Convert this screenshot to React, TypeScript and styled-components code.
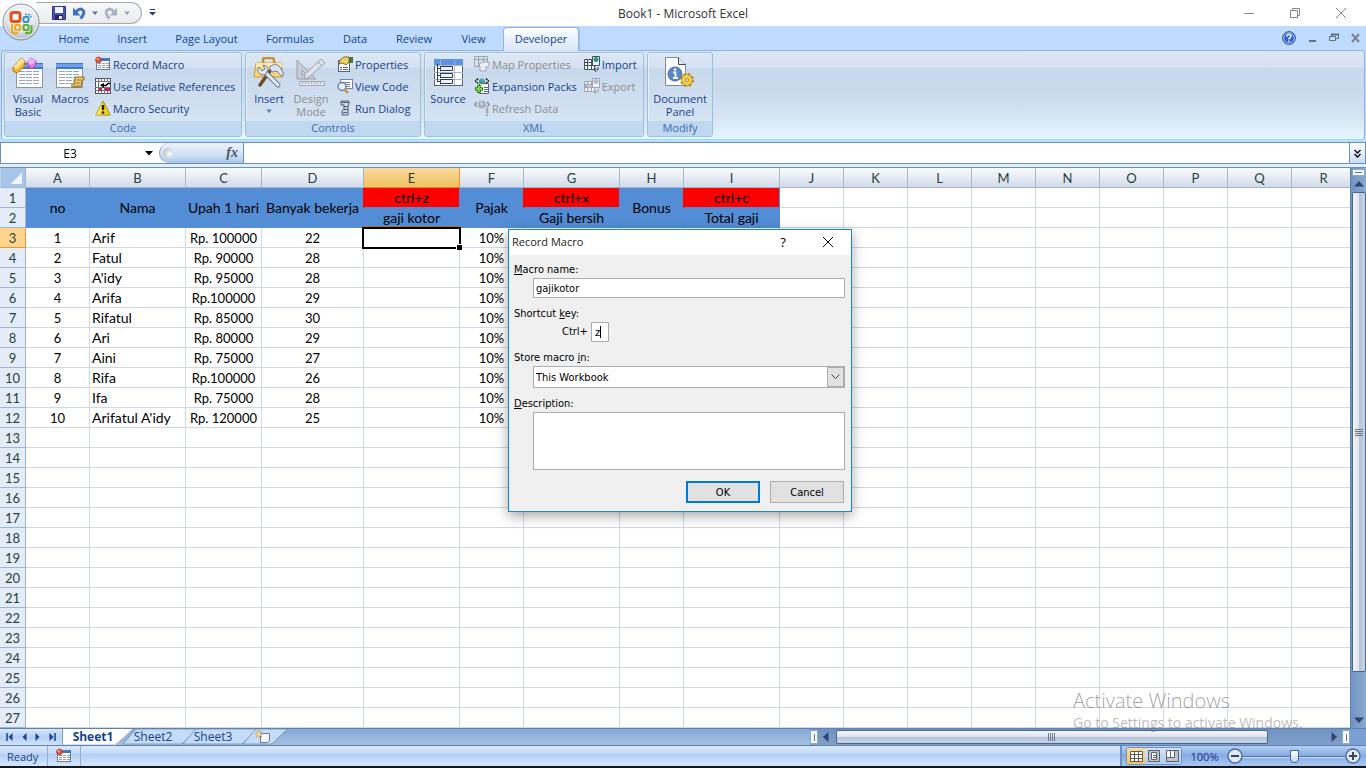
import React from "react";
import styled, { createGlobalStyle, css } from "styled-components";

const ui = `"Open Sans", "Noto Sans", sans-serif`;
const cellFont = `Lato, "Open Sans", sans-serif`;
const dialogFont = `"DejaVu Sans Condensed", "DejaVu Sans", sans-serif`;

const BLUE = "#538dd5";
const RED = "#ff0000";

const Global = createGlobalStyle`
  *, *::before, *::after { box-sizing: border-box; }
  body { margin: 0; background: #fff; font: 11px/13px ${ui}; color: #15428b; }
  button, input, select, textarea { font: inherit; color: inherit; margin: 0; border-radius: 0; }
  button { padding: 0; border: 0; background: none; }
  svg { display: block; flex: none; }
`;

const Page = styled.div`
  position: relative;
`;
const Workbook = styled.div`
  display: flex;
  flex-direction: column;
  min-height: 100vh;
  overflow: hidden;
  background: #bfdbff;
`;

/* ---------- title bar ---------- */
const TitleBar = styled.header`
  position: relative;
  display: flex;
  align-items: center;
  justify-content: space-between;
  height: 26px;
  background: #fff;
`;
const OfficeButton = styled.button`
  position: absolute;
  left: 1px;
  top: 3px;
  z-index: 2;
`;
const QuickAccess = styled.div`
  display: flex;
  align-items: center;
  height: 22px;
  width: 106px;
  margin-left: 36px;
  padding-left: 15px;
  gap: 6px;
  border: 1px solid #a3a8b0;
  border-left-color: transparent;
  border-radius: 0 11px 11px 0;
  background: linear-gradient(#f7f8f9, #e9ebee);
`;
const QuickMenu = styled.button`
  position: absolute;
  left: 149px;
  top: 8px;
`;
const Title = styled.h1`
  position: absolute;
  left: 0;
  right: 0;
  top: 6px;
  margin: 0;
  text-align: center;
  font-size: 12px;
  font-weight: 400;
  line-height: 16px;
  color: #333;
  pointer-events: none;
`;
const WindowButtons = styled.div`
  display: flex;
  gap: 34px;
  padding-right: 19px;
`;

/* ---------- ribbon ---------- */
const TabRow = styled.nav`
  display: flex;
  align-items: flex-end;
  height: 24px;
  padding-left: 45px;
  background: #bfdbff;
`;
const Tab = styled.button<{ $w: number; $active?: boolean }>`
  width: ${(p) => p.$w}px;
  height: 23px;
  padding-bottom: 1px;
  ${(p) =>
    p.$active &&
    css`
      position: relative;
      z-index: 1;
      margin: 0 0 -1px 2px;
      height: 24px;
      padding-bottom: 2px;
      border: 1px solid #8db2e3;
      border-bottom: 0;
      border-radius: 4px 4px 0 0;
      background: linear-gradient(#fff, #ebf3fe 40%, #dbe6f4);
      box-shadow: 1px 0 1px #9fc0e8;
    `}
`;
const BookButtons = styled.div`
  display: flex;
  align-items: center;
  gap: 12px;
  height: 24px;
  margin-left: auto;
  padding-right: 6px;
`;
const Ribbon = styled.section`
  display: flex;
  gap: 3px;
  height: 90px;
  margin: 0 1px;
  padding: 1px 2px 2px;
  border: 1px solid #8db2e3;
  border-bottom-color: #8fe3f5;
  border-radius: 4px;
  background: linear-gradient(#dbe6f4, #d7e3f2 16px, #c8d8ed 17px, #c9daee 40px, #d6e6f4 68px, #e5f6ff);
`;
const Group = styled.section<{ $w: number }>`
  display: flex;
  flex-direction: column;
  width: ${(p) => p.$w}px;
  border: 1px solid #9dbfdc;
  border-radius: 3px;
  box-shadow: inset 1px 1px 0 #e6eff9;
  background: linear-gradient(#dce7f5, #d5e2f2 14px, #c9d9ed 15px, #cfdff0 45px, #dbe8f5);
`;
const GroupBody = styled.div`
  display: flex;
  flex: 1;
  min-height: 0;
  padding: 0 2px;
`;
const GroupLabel = styled.h2`
  flex: none;
  margin: 0;
  height: 15px;
  text-align: center;
  font-size: 11px;
  line-height: 14px;
  font-weight: 400;
  color: #3e6aaa;
  background: #c1d8f1;
  border-radius: 0 0 3px 3px;
`;
const BigButton = styled.button<{ $w?: number; $off?: boolean }>`
  display: flex;
  flex-direction: column;
  align-items: center;
  gap: 3px;
  width: ${(p) => p.$w || 42}px;
  height: 66px;
  white-space: nowrap;
  color: ${(p) => (p.$off ? "#8d8d8d" : "#15428b")};
  & > svg { margin-top: 4px; }
`;
const MenuArrow = styled.i`
  display: grid;
  justify-content: center;
  padding-top: 3px;
`;
const Stack = styled.div<{ $gap: number }>`
  display: flex;
  flex-direction: column;
  margin-left: ${(p) => p.$gap}px;
`;
const SmallButton = styled.button<{ $off?: boolean }>`
  display: flex;
  align-items: center;
  gap: 2px;
  height: 22px;
  white-space: nowrap;
  color: ${(p) => (p.$off ? "#8d8d8d" : "#15428b")};
`;

/* ---------- formula bar ---------- */
const FormulaBar = styled.section`
  display: flex;
  height: 22px;
  margin-top: 2px;
  border: 1px solid #6a8fbd;
  background: #fff;
`;
const NameBox = styled.div`
  display: flex;
  align-items: center;
  gap: 6px;
  width: 158px;
`;
const NameInput = styled.input`
  width: 138px;
  border: 0;
  padding: 0;
  outline: 0;
  background: transparent;
  text-align: center;
  font-size: 12px;
  color: #000;
`;
const FxArea = styled.div`
  display: flex;
  align-items: center;
  justify-content: space-between;
  width: 85px;
  padding: 0 5px 0 3px;
  border-left: 1px solid #7fa0c8;
  border-right: 1px solid #6a8fbd;
  border-radius: 10px 0 0 10px;
  background: linear-gradient(#eef4fd, #cfe0f5 60%, #a9c5e8);
`;
const Knob = styled.span`
  width: 10px;
  height: 10px;
  border-radius: 50%;
  background: radial-gradient(circle at 70% 60%, #fff, #a9aeb9);
`;
const FxButton = styled.button`
  font: italic 700 14px/16px "Liberation Serif", serif;
  color: #4b5563;
`;
const FormulaInput = styled.input`
  flex: 1;
  border: 0;
  outline: 0;
  min-width: 0;
`;
const Expand = styled.button`
  display: grid;
  place-items: center;
  width: 16px;
  border-left: 1px solid #6a8fbd;
  background: linear-gradient(#fff, #c9dcf4);
`;
const Divider = styled.div`
  height: 4px;
  background: #e3eefb;
  border-bottom: 1px solid #6a8fbd;
`;

/* ---------- sheet ---------- */
const SheetArea = styled.main`
  display: flex;
  flex: 1;
  min-height: 0;
  background: #fff;
`;
const GridView = styled.div`
  flex: 1;
  min-width: 0;
  overflow: hidden;
`;
const Grid = styled.table`
  table-layout: fixed;
  width: 0;
  border-collapse: separate;
  border-spacing: 0;
  font: 14px/18px ${cellFont};
  color: #000;
`;
const Col = styled.col<{ $w: number }>`
  width: ${(p) => p.$w}px;
`;
const head = css`
  padding: 0;
  height: 20px;
  font-weight: 400;
  font-size: 13px;
  color: #27413e;
`;
const ColHead = styled.th<{ $on?: boolean }>`
  ${head}
  border-right: 1px solid ${(p) => (p.$on ? "#e8963a" : "#9eb6ce")};
  border-bottom: 1px solid ${(p) => (p.$on ? "#d98a32" : "#9eb6ce")};
  background: ${(p) => (p.$on ? "linear-gradient(#f9d99f, #f1c15f)" : "linear-gradient(#f9fcfd, #d3dbe9)")};
`;
const RowHead = styled.th<{ $on?: boolean }>`
  ${head}
  border-right: 1px solid ${(p) => (p.$on ? "#e8963a" : "#9eb6ce")};
  border-bottom: 1px solid ${(p) => (p.$on ? "#e8963a" : "#9eb6ce")};
  background: ${(p) => (p.$on ? "#ffd58d" : "#e4ecf7")};
`;
const Corner = styled.th`
  padding: 0;
  border: 1px solid #9eb6ce;
  border-left-color: #b9d1ef;
  border-top: 0;
  background: linear-gradient(135deg, transparent 68%, #eef4fc 69%) 0 0 / 21px 16px no-repeat, #a9c4e9;
`;
const Cell = styled.td<{ $fill?: string; $left?: boolean; $num?: boolean }>`
  position: relative;
  height: 20px;
  padding: 0 ${(p) => (p.$left ? 2 : 0)}px;
  white-space: nowrap;
  font-size: ${(p) => (p.$num ? 13 : 14)}px;
  text-align: ${(p) => (p.$left ? "left" : "center")};
  background: ${(p) => p.$fill || "#fff"};
  border-right: 1px solid ${(p) => (p.$fill ? BLUE : "#d0d7e5")};
  border-bottom: 1px solid ${(p) => (p.$fill ? BLUE : "#d0d7e5")};
  box-shadow: ${(p) => (p.$fill === RED ? `-1px 0 0 ${RED}` : "none")};
`;
const Selection = styled.span`
  position: absolute;
  inset: -1px -2px -2px;
  z-index: 1;
  border: 2px solid #000;
  box-shadow: 0 -1px 0 #b5702a;
  &::after {
    content: "";
    position: absolute;
    right: -3px;
    bottom: -3px;
    width: 6px;
    height: 6px;
    background: #000;
    border: solid #fff;
    border-width: 1px 0 0 1px;
  }
`;

/* ---------- scroll bars ---------- */
const VScroll = styled.div`
  display: flex;
  flex-direction: column;
  align-items: center;
  width: 16px;
  border-left: 1px solid #5d83b5;
  background: linear-gradient(90deg, #6f93c2, #8baad2);
`;
const SplitV = styled.div`
  display: grid;
  place-items: center;
  width: 13px;
  height: 7px;
  margin-top: 1px;
  border: 1px solid #86a9d4;
  background: #fff;
  &::before { content: ""; width: 7px; height: 1px; background: #4d76ab; }
`;
const ArrowSlot = styled.button`
  display: grid;
  place-items: center;
  width: 16px;
  height: 16px;
`;
const ThumbV = styled.div`
  display: grid;
  place-items: center;
  width: 14px;
  flex: 480;
  border: 1px solid #4a668f;
  border-radius: 2px;
  background: linear-gradient(90deg, #f4f6fa, #dfe5ee 45%, #b4c4d9 55%, #c7d4e5);
`;
const Spring = styled.div<{ $f: number }>`
  flex: ${(p) => p.$f};
`;
const BottomBar = styled.div`
  display: flex;
  height: 18px;
  border-top: 1px solid #5d83b5;
  border-bottom: 1px solid #5d83b5;
  background: linear-gradient(#86a8d6, #a5bfe0);
`;
const SheetNav = styled.div`
  display: flex;
  align-items: center;
  justify-content: space-around;
  width: 63px;
  padding: 0 3px;
  border-right: 1px solid #7f9fc9;
  background: linear-gradient(#d9e7f9, #b6d0f2 50%, #d0e2f9);
`;
const SheetTab = styled.button<{ $active?: boolean; $w: number }>`
  position: relative;
  width: ${(p) => p.$w}px;
  font-size: 12px;
  line-height: 16px;
  font-weight: ${(p) => (p.$active ? 700 : 400)};
  z-index: ${(p) => (p.$active ? 1 : 0)};
  & > span { position: relative; }
  & > svg { position: absolute; left: 0; top: 0; }
`;
const NewSheet = styled.span`
  display: grid;
  justify-content: center;
`;
const HScroll = styled.div`
  display: flex;
  align-items: center;
  width: 556px;
  margin-left: auto;
  background: linear-gradient(#6f93c2, #7f9fc9);
`;
const SplitH = styled.div`
  display: grid;
  place-items: center;
  width: 8px;
  height: 14px;
  border: 1px solid #86a9d4;
  background: #fff;
  &::before { content: ""; width: 1px; height: 7px; background: #4d76ab; }
`;
const ThumbH = styled.div`
  display: grid;
  place-items: center;
  flex: 431;
  height: 14px;
  margin-left: 2px;
  border: 1px solid #4a668f;
  border-radius: 2px;
  background: linear-gradient(#f4f6fa, #dfe5ee 45%, #b4c4d9 55%, #c7d4e5);
`;
const ScrollCorner = styled.div`
  width: 16px;
  height: 16px;
  background: #7b9fd3;
`;

/* ---------- status bar ---------- */
const StatusBar = styled.footer`
  display: flex;
  align-items: center;
  height: 22px;
  border-bottom: 2px solid #14161d;
  background: linear-gradient(#dbe8fb, #c5dbf8 7px, #b3cff4 8px, #d5e6fc);
`;
const Ready = styled.span`
  width: 47px;
  padding-left: 7px;
`;
const RecordSlot = styled.button`
  display: grid;
  place-items: center;
  width: 34px;
  height: 20px;
  border: solid #8fb0dc;
  border-width: 0 1px;
`;
const ZoomArea = styled.div`
  display: flex;
  align-items: center;
  height: 20px;
  width: 246px;
  margin-left: auto;
  padding: 0 5px 0 4px;
  border-left: 2px solid #6d94c9;
  background: linear-gradient(#b4cff3, #8db2e5 8px, #84abe2 9px, #a9c8f2);
`;
const ViewButtons = styled.div`
  display: flex;
  height: 18px;
  border: 1px solid #6d94c9;
  border-radius: 2px;
`;
const ViewButton = styled.button<{ $on?: boolean }>`
  display: grid;
  place-items: center;
  width: 18px;
  background: ${(p) => (p.$on ? "linear-gradient(#fbdca5, #f7c65c)" : "linear-gradient(#d4e4f9, #b0ccf0)")};
`;
const Percent = styled.button`
  width: 45px;
  color: #15308b;
`;
const Slider = styled.div`
  display: flex;
  align-items: center;
  flex: 1;
  height: 18px;
  background: linear-gradient(#4a72a8 1px, #d5e4f8 1px) 0 9px / 100% 2px no-repeat;
`;
const Range = styled.input`
  appearance: none;
  width: 100%;
  height: 14px;
  background: transparent;
  &::-webkit-slider-thumb {
    appearance: none;
    width: 9px;
    height: 13px;
    background: linear-gradient(#fff, #c5d8f3);
    border: 1px solid #3d639b;
    border-radius: 1px 1px 5px 5px;
  }
`;

/* ---------- dialog ---------- */
const Dialog = styled.form`
  position: absolute;
  left: 508px;
  top: 229px;
  z-index: 5;
  width: 344px;
  border: 1px solid #1883d7;
  background: #f0f0f0;
  box-shadow: 0 4px 12px rgba(0, 0, 0, 0.35);
  font: 11px/14px ${dialogFont};
  color: #000;
`;
const DialogTitle = styled.div`
  display: flex;
  align-items: center;
  height: 25px;
  padding: 0 17px 1px 3px;
  background: #fff;
  font: 11px/16px ${ui};
  & > h2 { margin: 0; flex: 1; font: inherit; color: #222; }
`;
const Help = styled.button`
  width: 12px;
  margin-right: 33px;
  font-size: 13px;
  color: #000;
`;
const DialogBody = styled.div`
  display: flex;
  flex-direction: column;
  padding: 8px 6px 8px 5px;
`;
const Label = styled.label`
  line-height: 14px;
  & > u { text-underline-offset: 1px; }
`;
const control = css`
  border: 1px solid #abadb3;
  background: #fff;
  outline: 0;
`;
const NameField = styled.input`
  ${control}
  height: 20px;
  margin: 1px 0 9px 19px;
  padding: 0 2px;
`;
const KeyRow = styled.div`
  position: relative;
  display: flex;
  align-items: center;
  gap: 3px;
  margin: 1px 0 9px 48px;
`;
const KeyField = styled.input`
  ${control}
  width: 18px;
  height: 20px;
  padding: 0 3px;
`;
const Caret = styled.span`
  position: absolute;
  right: 244px;
  top: 4px;
  width: 1px;
  height: 12px;
  background: #000;
`;
const SelectWrap = styled.div`
  position: relative;
  margin: 1px 0 9px 19px;
  & > span {
    position: absolute;
    right: 1px;
    top: 1px;
    display: grid;
    place-items: center;
    width: 17px;
    height: 20px;
    border: 1px solid #abadb3;
    background: #e1e1e1;
    pointer-events: none;
  }
`;
const Select = styled.select`
  ${control}
  appearance: none;
  display: block;
  width: 100%;
  height: 22px;
  padding: 1px 2px 0;
`;
const Description = styled.textarea`
  ${control}
  height: 58px;
  margin: 1px 0 11px 19px;
  resize: none;
`;
const Actions = styled.div`
  display: flex;
  justify-content: flex-end;
  gap: 10px;
  padding-right: 1px;
`;
const Action = styled.button<{ $primary?: boolean }>`
  width: 74px;
  height: 22px;
  padding-top: 1px;
  border: ${(p) => (p.$primary ? "2px solid #0078d7" : "1px solid #adadad")};
  background: #e1e1e1;
`;

const Watermark = styled.aside`
  position: absolute;
  right: 56px;
  bottom: 36px;
  z-index: 3;
  width: 237px;
  white-space: nowrap;
  color: rgba(120, 120, 120, 0.5);
  font: 14px/18px ${ui};
  pointer-events: none;
  & > strong {
    display: block;
    font-size: 20px;
    line-height: 27px;
    font-weight: 300;
    color: rgba(100, 100, 100, 0.6);
  }
`;

/* ---------- drawings ---------- */
const TableSheet = ({ x = 0, y = 0, w = 26, h = 24 }) => (
  <g>
    <rect x={x + 0.5} y={y + 0.5} width={w} height={h} fill="#fff" stroke="#8795ad" />
    <rect x={x} y={y} width={w + 1} height="6" fill="#3d78d4" />
    <rect x={x} y={y + 1} width={w + 1} height="3" fill="#6fa0ea" />
    {[8, 11, 14, 17, 20].map((d) => (
      <path key={d} d={`M${x + 3} ${y + d + 0.5}h6m1 0h6m1 0h6`} stroke="#98a5bb" />
    ))}
  </g>
);
const VisualBasicIcon = () => (
  <svg width="32" height="32" viewBox="0 0 32 32">
    <TableSheet x={4} y={6} />
    <path d="M1 10 9 1l4 3-1 6-7 6-4-2z" fill="#eeb93f" stroke="#a97816" />
    <path d="M1 10 9 1l4 3-8 8z" fill="#fbe08e" />
    <path d="m15 5 4-4 5 3v4l-4 4-5-4z" fill="#d878e0" stroke="#9c4fa9" />
    <path d="m15 5 4-4 5 3-4 4z" fill="#f0b2f4" />
  </svg>
);
const MacrosIcon = () => (
  <svg width="32" height="32" viewBox="0 0 32 32">
    <TableSheet x={2} y={6} />
    <path d="M21 20h9v3h-2l-1 7h-8c-2 0-2-3 0-3h1z" fill="#e9c873" stroke="#8c6a1d" />
    <path d="M22 23h5M21 26h5M19 29h7" stroke="#a9822e" />
  </svg>
);
const SmallTable = () => (
  <svg width="16" height="16" viewBox="0 0 16 16">
    <rect x="1.500" y="2.500" width="13" height="11" fill="#fff" stroke="#67789b" />
    <path d="M1 2h14v3H1z" fill="#4576c4" />
    <path d="M3 7.500h11M3 9.500h11M3 11.500h11" stroke="#8e9dbb" strokeDasharray="3 1" />
    <circle cx="3.500" cy="4" r="3" fill="#dd5a3c" stroke="#a8341f" strokeWidth=".6" />
    <circle cx="2.600" cy="3" r="1" fill="#f7b29f" />
  </svg>
);
const RelativeIcon = () => (
  <svg width="16" height="16" viewBox="0 0 16 16">
    <rect x="0.500" y="0.500" width="15" height="15" fill="#fff" stroke="#444c5e" />
    <path d="M3.500 0v16M6.500 0v16M9.500 0v16M12.500 0v16M0 3.500h16M0 9.500h16M0 12.500h16" stroke="#6c7386" />
    <path d="M6 4h9v5H6z" fill="#fff" />
    <path d="M4 10h3v3H4zM10 10h5v3h-5z" fill="#c81e4a" />
    <path d="M8 7.500h3l2-2h2" stroke="#000" strokeWidth="1.500" fill="none" />
    <path d="m9 5-4 2 4 3z" fill="#000" />
  </svg>
);
const WarningIcon = () => (
  <svg width="16" height="16" viewBox="0 0 16 16">
    <path d="M8 1 15.300 15H.7z" fill="#f8d516" stroke="#a88c0a" strokeLinejoin="round" />
    <path d="M8 1 .7 15H5z" fill="#fdf08a" opacity=".6" />
    <path d="M8 5v5" stroke="#222" strokeWidth="2.400" />
    <circle cx="8" cy="12.500" r="1.300" fill="#222" />
  </svg>
);
const ToolsIcon = () => (
  <svg width="32" height="32" viewBox="0 0 32 32">
    <path d="M10 6V3q0-2 2-2h7q2 0 2 2v3" fill="none" stroke="#c8922a" strokeWidth="2.500" />
    <path d="M3 6h25l2 14H1z" fill="#fad679" stroke="#cf9930" />
    <path d="M3 6h25l1 4H3z" fill="#fdebb5" />
    <path d="m17 14-10 14" stroke="#704c2a" strokeWidth="3.500" strokeLinecap="round" />
    <path d="m16 10 6-3q5 1 6 5l3 5-3 2-4-5-5 1z" fill="#dbe3ef" stroke="#7384a0" />
    <path d="m12 15 13 13" stroke="#6a7c98" strokeWidth="5" strokeLinecap="round" />
    <path d="m12 15 13 13" stroke="#e3eaf4" strokeWidth="3" strokeLinecap="round" />
    <path d="M6 10q-3 4 1 7 3 2 6 0l2-5q-1-4-5-4l2 4-3 2z" fill="#e3eaf4" stroke="#6a7c98" />
  </svg>
);
const DesignIcon = () => (
  <svg width="32" height="32" viewBox="0 0 32 32">
    <path d="M2 3v19h19zM7 13v5h5z" fill="#c6cbd4" fillRule="evenodd" stroke="#9aa2b0" />
    <path d="m10 17 16-15 4 4-16 14-5 2z" fill="#dfe3e9" stroke="#9aa2b0" />
    <path d="m23 5 4 4" stroke="#9aa2b0" />
    <rect x="4.500" y="24.500" width="25" height="4" fill="#e2e5ea" stroke="#a5acb8" />
    <path d="M7.500 25v2m3-2v2m3-2v2m3-2v2m3-2v2m3-2v2m3-2v2" stroke="#a5acb8" />
  </svg>
);
const PropertiesIcon = () => (
  <svg width="16" height="16" viewBox="0 0 16 16">
    <rect x="1.500" y="4.500" width="11" height="11" fill="#fff" stroke="#51617e" />
    <path d="M3 11.500h2m1 0h5M3 13.500h2m1 0h5" stroke="#51617e" />
    <path d="m3 4 4-3h5v5L9 9 6 7 2 8z" fill="#f1cf60" stroke="#8a6a14" />
    <path d="M12 1h4v6h-4z" fill="#427447" />
  </svg>
);
const ViewCodeIcon = () => (
  <svg width="16" height="16" viewBox="0 0 16 16">
    <rect x="3.500" y="1.500" width="12" height="9" fill="#fff" stroke="#7383a0" />
    <path d="M6 4.500h7M6 6.500h7M9 8.500h4" stroke="#7383a0" />
    <circle cx="5" cy="8.500" r="4" fill="#e5eefa" stroke="#6b7c99" strokeWidth="1.400" />
    <path d="m8 12 3 3" stroke="#d8892f" strokeWidth="2.400" />
  </svg>
);
const RunDialogIcon = () => (
  <svg width="16" height="16" viewBox="0 0 16 16">
    <path d="M4 1h8v3l-1 3v8H5v-4l2-2V5H4z" fill="#cfd6e2" stroke="#4f5d78" />
    <path d="M4 2.500h8M7 6.500h4M7 9.500h4M6 12.500h4" stroke="#4f5d78" />
  </svg>
);
const SourceIcon = () => (
  <svg width="32" height="32" viewBox="0 0 32 32">
    <rect x="2.500" y="2.500" width="28" height="26" fill="#fff" stroke="#53627e" />
    <path d="M2 2h29v6H2z" fill="#5b93e6" />
    <path d="M8.500 3v25M22.500 3v25M2 8.500h29M2 15.500h29M2 22.500h29" stroke="#a9b6cc" />
    <path d="M5.500 7v18M5 11.500h4M5 18.500h4M5 24.500h4" stroke="#2b3a55" fill="none" />
    <path d="M8.500 9.500h12v4h-12zM8.500 16.500h12v4h-12zM8.500 22.500h12v4h-12z" fill="#eef3fa" stroke="#2b3a55" />
  </svg>
);
const MapPropsIcon = () => (
  <svg width="16" height="16" viewBox="0 0 16 16">
    <path d="M.5.5h13v10H.5zM0 3.500h14M4.500 0v11M9.500 0v11" fill="#dde2ea" stroke="#9da6b5" />
    <path d="m5 8 4-2h6v4l-3 1v4H6v-4z" fill="#eceff4" stroke="#9da6b5" />
  </svg>
);
const ExpansionIcon = () => (
  <svg width="16" height="16" viewBox="0 0 16 16">
    <path d="M5.500 5.500h9v10h-9z" fill="#fff" stroke="#5c6a86" />
    <path d="M10 9.500h4M10 11.500h4M10 13.500h4" stroke="#5c6a86" />
    <path d="M4 .5 1.500 3 4 5.500M12 .5 14.500 3 12 5.500" fill="none" stroke="#111" strokeWidth="1.400" strokeDasharray="2 .7" />
    <circle cx="8" cy="3.500" r="3" fill="#3f9a76" />
    <path d="M7 1h3v2H7z" fill="#5ea1e8" />
    <path d="M5 7v8M1 11h8" stroke="#2f7d15" strokeWidth="3.600" />
    <path d="M5 8v6M2 11h6" stroke="#7edb3b" strokeWidth="1.800" />
  </svg>
);
const RefreshIcon = () => (
  <svg width="16" height="16" viewBox="0 0 16 16">
    <path d="M3 2 .7 4.500 3 7M13 2l2.300 2.500L13 7" fill="none" stroke="#8993a5" strokeWidth="1.300" />
    <circle cx="8" cy="4.500" r="4" fill="#a9b1c0" />
    <path d="M6 2h3v3H6z" fill="#c8ced8" />
    <path d="M13 8v5" stroke="#9da6b5" strokeWidth="2.400" />
    <circle cx="13" cy="15" r="1.200" fill="#9da6b5" />
  </svg>
);
const PortIcon = ({ off = false }) => {
  const c = off ? "#9da6b5" : "#42506b";
  return (
    <svg width="16" height="16" viewBox="0 0 16 16">
      <path d="M.5 3.500h10v10H.5zM0 6.500h11M3.500 4v9M7.500 4v9M0 9.500h11" fill="#f4f6fa" stroke={c} />
      <path d="M8.500.5h7v9h-7z" fill="#eef2f8" stroke={c} />
      <circle cx="12" cy="3.500" r="2.500" fill={off ? "#b5bcc8" : "#2f9a62"} />
      {off && <path d="M1 8q4-4 8 0-4 4-8 0z" fill="#c5cbd5" stroke={c} />}
      <path d="M14 11v3h-4m2-2-2 2 2 2" fill="none" stroke={c} />
    </svg>
  );
};
const DocumentPanelIcon = () => (
  <svg width="32" height="32" viewBox="0 0 32 32">
    <path d="M1.500.5h13l7 7v21h-20z" fill="#fff" stroke="#7e8aa1" />
    <path d="M14.500.5v7h7" fill="#e3e8f0" stroke="#3e485c" />
    <circle cx="11" cy="17" r="7" fill="#5b86c7" stroke="#446cab" />
    <path d="M9 15.500h2.500V21M9 21h5" stroke="#fff" strokeWidth="1.800" fill="none" />
    <circle cx="11" cy="12.500" r="1.300" fill="#fff" />
    <circle cx="23" cy="23" r="5.500" fill="none" stroke="#b88a16" strokeWidth="3" strokeDasharray="2.300 2.020" />
    <circle cx="23" cy="23" r="3.600" fill="none" stroke="#b88a16" strokeWidth="4.500" />
    <circle cx="23" cy="23" r="3.600" fill="none" stroke="#f5cf4c" strokeWidth="3" />
  </svg>
);
const OfficeLogo = () => (
  <svg width="40" height="40" viewBox="0 0 40 40">
    <defs>
      <radialGradient id="orb" cx="50%" cy="35%" r="65%">
        <stop offset="0" stopColor="#fff" />
        <stop offset=".6" stopColor="#e4e7ec" />
        <stop offset="1" stopColor="#a9b0bb" />
      </radialGradient>
    </defs>
    <circle cx="20" cy="19" r="18" fill="url(#orb)" stroke="#8d96a5" />
    <circle cx="20" cy="19" r="16.500" fill="none" stroke="#fff" strokeOpacity=".8" />
    <rect x="10" y="9.500" width="9" height="9" rx="2" fill="none" stroke="#e2541b" strokeWidth="3" />
    <rect x="22.500" y="14" width="5" height="5" rx="1" fill="none" stroke="#2f8fd8" strokeWidth="2" />
    <path d="M24 11.500h4q2 0 2 4" fill="none" stroke="#2f8fd8" strokeWidth="1.500" strokeDasharray="2 1" />
    <rect x="14" y="22" width="5" height="5" rx="1" fill="none" stroke="#f0ab19" strokeWidth="2.200" />
    <path d="M11 21v7q0 2 3 2h3" fill="none" stroke="#f0ab19" strokeWidth="2" />
    <rect x="22.500" y="22" width="5" height="5" rx="1" fill="none" stroke="#5db337" strokeWidth="2.200" />
    <path d="M30.500 22v5q0 3-3 3H24" fill="none" stroke="#5db337" strokeWidth="2" />
  </svg>
);
const SaveIcon = () => (
  <svg width="14" height="14" viewBox="0 0 14 14">
    <path d="M.5.5h13v13H.5z" fill="#4a4fb4" stroke="#30368f" />
    <path d="M3 1h8v6H3z" fill="#f3f5fb" />
    <path d="M3 9h8v5H3z" fill="#23276f" />
    <path d="M7 10h3v3H7z" fill="#f3f5fb" />
  </svg>
);
const UndoIcon = ({ off = false }) => (
  <svg width="14" height="14" viewBox="0 0 14 14">
    <g transform={off ? "matrix(-1 0 0 1 14 0)" : undefined}>
      <path d="M4 6q3-4 6-2.500 3.500 2 .5 6.500l-2 2.500" fill="none" stroke={off ? "#a9b4c6" : "#3e6fc9"} strokeWidth="3" />
      <path d="M1 1.500v8h7.500z" fill={off ? "#a9b4c6" : "#3e6fc9"} />
    </g>
  </svg>
);
const Tri = ({ c = "#15428b", dir = "down", s = 6 }: { c?: string; dir?: "down" | "up" | "left" | "right"; s?: number }) => {
  const r = { down: 0, left: 90, up: 180, right: 270 }[dir];
  return (
    <svg width={s + 2} height={s + 2} viewBox="0 0 8 8">
      <path d="M0 2h8L4 6.500z" fill={c} transform={`rotate(${r} 4 4)`} />
    </svg>
  );
};
const NewSheetIcon = () => (
  <svg width="16" height="14" viewBox="0 0 16 14">
    <path d="M5.500 3.500h9v7l-2 2h-7z" fill="#f5f8fd" stroke="#62789f" />
    <path d="M4 0v8M0 4h8M1 1l6 6M7 1 1 7" stroke="#d99a2a" />
    <circle cx="4" cy="4" r="1.500" fill="#fff1b8" />
  </svg>
);
const TabShape = ({ w, active = false }: { w: number; active?: boolean }) => (
  <svg width={w + 16} height="16" viewBox={`0 0 ${w + 16} 16`}>
    <path
      d={active ? `M0 0h${w + 14}L${w} 13q-1 2-3 2H0z` : `M0 15 12 1q1-1 2-1h${w}L${w} 14l-2 1z`}
      fill={active ? "#fff" : "#c6dbf6"}
      stroke={active ? "#fff" : "#7f9fc9"}
    />
    {active && <path d={`M${w + 14} 0 ${w} 13q-1 2-3 2`} fill="none" stroke="#7f9fc9" />}
  </svg>
);
const NavArrow = ({ dir, bar }: { dir: "left" | "right"; bar?: boolean }) => (
  <svg width="8" height="8" viewBox="0 0 8 8">
    <g transform={dir === "right" ? "matrix(-1 0 0 1 8 0)" : undefined}>
      <path d="M6.500 0v8L2.500 4z" fill="#15428b" />
      {bar && <path d="M1 0v8" stroke="#15428b" strokeWidth="1.500" />}
    </g>
  </svg>
);
const Grip = ({ v = false }) => (
  <svg width="8" height="8" viewBox="0 0 8 8">
    <path d={v ? "M0 1.500h8M0 3.500h8M0 5.500h8M0 7.500h8" : "M.5 0v8M2.500 0v8M4.500 0v8M6.500 0v8"} stroke="#6c7a91" />
  </svg>
);
const ZoomKnob = ({ plus = false }) => (
  <svg width="16" height="16" viewBox="0 0 16 16">
    <circle cx="8" cy="8" r="7" fill="#dfe9f7" stroke="#4c6c9c" strokeWidth="1.400" />
    <path d={plus ? "M4 8h8M8 4v8" : "M4 8h8"} stroke="#3b4657" strokeWidth="2" />
  </svg>
);

/* ---------- data ---------- */
const columns: [string, number][] = [
  ["A", 64], ["B", 96], ["C", 76], ["D", 102], ["E", 96], ["F", 64], ["G", 96], ["H", 64], ["I", 96],
  ...("JKLMNOPQR".split("").map((l) => [l, 64]) as [string, number][]),
];
const people = [
  ["1", "Arif", "Rp. 100000", "22"],
  ["2", "Fatul", "Rp. 90000", "28"],
  ["3", "A'idy", "Rp. 95000", "28"],
  ["4", "Arifa", "Rp.100000", "29"],
  ["5", "Rifatul", "Rp. 85000", "30"],
  ["6", "Ari", "Rp. 80000", "29"],
  ["7", "Aini", "Rp. 75000", "27"],
  ["8", "Rifa", "Rp.100000", "26"],
  ["9", "Ifa", "Rp. 75000", "28"],
  ["10", "Arifatul A'idy", "Rp. 120000", "25"],
];
const tabs: [string, number][] = [
  ["Home", 58], ["Insert", 58], ["Page Layout", 91], ["Formulas", 76], ["Data", 54], ["Review", 64], ["View", 55],
];
const blanks = (from: number) => columns.slice(from).map(([l]) => <Cell key={l} />);

export default function App() {
  return (
    <Page>
      <Global />
      <Workbook>
        <TitleBar>
          <OfficeButton aria-label="Office Button"><OfficeLogo /></OfficeButton>
          <QuickAccess>
            <button aria-label="Save"><SaveIcon /></button>
            <button aria-label="Undo"><UndoIcon /></button>
            <Tri s={4} c="#5475a8" />
            <button aria-label="Redo"><UndoIcon off /></button>
            <Tri s={4} c="#a0a6b0" />
          </QuickAccess>
          <QuickMenu aria-label="Customize Quick Access Toolbar">
            <svg width="7" height="8" viewBox="0 0 7 8"><path d="M1 1.500h5" stroke="#15428b" /><path d="M0 4h7L3.500 7.500z" fill="#15428b" /></svg>
          </QuickMenu>
          <Title>Book1 - Microsoft Excel</Title>
          <WindowButtons>
            <button aria-label="Minimize"><svg width="12" height="12"><path d="M1 6.500h10" stroke="#888" /></svg></button>
            <button aria-label="Restore"><svg width="12" height="12"><path d="M1.500 3.500h7v7h-7zM3.500 3V1.500h7v7H9" fill="none" stroke="#888" /></svg></button>
            <button aria-label="Close"><svg width="12" height="12"><path d="m1 1 10 10M11 1 1 11" stroke="#888" /></svg></button>
          </WindowButtons>
        </TitleBar>

        <TabRow>
          {tabs.map(([t, w]) => <Tab key={t} $w={w}>{t}</Tab>)}
          <Tab $w={76} $active>Developer</Tab>
          <BookButtons>
            <button aria-label="Help">
              <svg width="14" height="14" viewBox="0 0 14 14">
                <circle cx="7" cy="7" r="6.300" fill="#2a62d6" stroke="#1b3f92" />
                <circle cx="7" cy="7" r="5.300" fill="none" stroke="#b7cdf7" />
                <path d="M5 5.500q0-2 2-2t2 1.700Q9 6.500 7 7.500v1m0 1v1.500" fill="none" stroke="#fff" strokeWidth="1.500" />
              </svg>
            </button>
            <button aria-label="Minimize workbook"><svg width="9" height="10"><path d="M1 8h7" stroke="#666f7c" strokeWidth="2" /></svg></button>
            <button aria-label="Restore workbook"><svg width="10" height="10"><path d="M.5 3.500h6v4h-6zM2.500 3V1.500h7v4H7" fill="none" stroke="#666f7c" /><path d="M2 1.500h8" stroke="#666f7c" strokeWidth="2" /></svg></button>
            <button aria-label="Close workbook"><svg width="9" height="10"><path d="m1 1 7 8M8 1 1 9" stroke="#7b828d" strokeWidth="2" /></svg></button>
          </BookButtons>
        </TabRow>

        <Ribbon>
          <Group $w={238}>
            <GroupBody>
              <BigButton><VisualBasicIcon /><span>Visual<br />Basic</span></BigButton>
              <BigButton><MacrosIcon /><span>Macros</span></BigButton>
              <Stack $gap={4}>
                <SmallButton><SmallTable />Record Macro</SmallButton>
                <SmallButton><RelativeIcon />Use Relative References</SmallButton>
                <SmallButton><WarningIcon />Macro Security</SmallButton>
              </Stack>
            </GroupBody>
            <GroupLabel>Code</GroupLabel>
          </Group>
          <Group $w={176}>
            <GroupBody>
              <BigButton><ToolsIcon /><span>Insert<MenuArrow><Tri s={4} c="#5f86bf" /></MenuArrow></span></BigButton>
              <BigButton $off><DesignIcon /><span>Design<br />Mode</span></BigButton>
              <Stack $gap={5}>
                <SmallButton><PropertiesIcon />Properties</SmallButton>
                <SmallButton><ViewCodeIcon />View Code</SmallButton>
                <SmallButton><RunDialogIcon />Run Dialog</SmallButton>
              </Stack>
            </GroupBody>
            <GroupLabel>Controls</GroupLabel>
          </Group>
          <Group $w={220}>
            <GroupBody>
              <BigButton><SourceIcon /><span>Source</span></BigButton>
              <Stack $gap={5}>
                <SmallButton $off><MapPropsIcon />Map Properties</SmallButton>
                <SmallButton><ExpansionIcon />Expansion Packs</SmallButton>
                <SmallButton $off><RefreshIcon />Refresh Data</SmallButton>
              </Stack>
              <Stack $gap={7}>
                <SmallButton><PortIcon />Import</SmallButton>
                <SmallButton $off><PortIcon off />Export</SmallButton>
              </Stack>
            </GroupBody>
            <GroupLabel>XML</GroupLabel>
          </Group>
          <Group $w={66}>
            <GroupBody>
              <BigButton $w={60}><DocumentPanelIcon /><span>Document<br />Panel</span></BigButton>
            </GroupBody>
            <GroupLabel>Modify</GroupLabel>
          </Group>
        </Ribbon>

        <FormulaBar>
          <NameBox>
            <NameInput aria-label="Name Box" defaultValue="E3" />
            <button aria-label="Names"><Tri c="#000" /></button>
          </NameBox>
          <FxArea><Knob /><FxButton aria-label="Insert Function">fx</FxButton></FxArea>
          <FormulaInput aria-label="Formula" />
          <Expand aria-label="Expand formula bar">
            <svg width="7" height="9"><path d="m.5 1 3 3 3-3m-6 4 3 3 3-3" fill="none" stroke="#111" strokeWidth="1.500" /></svg>
          </Expand>
        </FormulaBar>
        <Divider />

        <SheetArea>
          <GridView>
            <Grid>
              <colgroup>
                <Col $w={26} />
                {columns.map(([l, w]) => <Col key={l} $w={w} />)}
              </colgroup>
              <thead>
                <tr>
                  <Corner />
                  {columns.map(([l]) => <ColHead key={l} scope="col" $on={l === "E"}>{l}</ColHead>)}
                </tr>
              </thead>
              <tbody>
                <tr>
                  <RowHead scope="row">1</RowHead>
                  <Cell $fill={BLUE} rowSpan={2}>no</Cell>
                  <Cell $fill={BLUE} rowSpan={2}>Nama</Cell>
                  <Cell $fill={BLUE} rowSpan={2}>Upah 1 hari</Cell>
                  <Cell $fill={BLUE} rowSpan={2}>Banyak bekerja</Cell>
                  <Cell $fill={RED}>ctrl+z</Cell>
                  <Cell $fill={BLUE} rowSpan={2}>Pajak</Cell>
                  <Cell $fill={RED}>ctrl+x</Cell>
                  <Cell $fill={BLUE} rowSpan={2}>Bonus</Cell>
                  <Cell $fill={RED}>ctrl+c</Cell>
                  {blanks(9)}
                </tr>
                <tr>
                  <RowHead scope="row">2</RowHead>
                  <Cell $fill={BLUE}>gaji kotor</Cell>
                  <Cell $fill={BLUE}>Gaji bersih</Cell>
                  <Cell $fill={BLUE}>Total gaji</Cell>
                  {blanks(9)}
                </tr>
                {people.map((p, i) => (
                  <tr key={p[0]}>
                    <RowHead scope="row" $on={i === 0}>{i + 3}</RowHead>
                    <Cell $num>{p[0]}</Cell>
                    <Cell $left>{p[1]}</Cell>
                    <Cell $num>{p[2]}</Cell>
                    <Cell $num>{p[3]}</Cell>
                    <Cell>{i === 0 && <Selection />}</Cell>
                    <Cell $num>10%</Cell>
                    {blanks(6)}
                  </tr>
                ))}
                {Array.from({ length: 15 }, (_, i) => (
                  <tr key={i}>
                    <RowHead scope="row">{i + 13}</RowHead>
                    {blanks(0)}
                  </tr>
                ))}
              </tbody>
            </Grid>
          </GridView>
          <VScroll>
            <SplitV />
            <ArrowSlot aria-label="Scroll up"><Tri dir="up" s={8} c="#33436b" /></ArrowSlot>
            <ThumbV><Grip v /></ThumbV>
            <Spring $f={40} />
            <ArrowSlot aria-label="Scroll down"><Tri s={8} c="#33436b" /></ArrowSlot>
          </VScroll>
        </SheetArea>

        <BottomBar>
          <SheetNav>
            <button aria-label="First sheet"><NavArrow dir="left" bar /></button>
            <button aria-label="Previous sheet"><NavArrow dir="left" /></button>
            <button aria-label="Next sheet"><NavArrow dir="right" /></button>
            <button aria-label="Last sheet"><NavArrow dir="right" bar /></button>
          </SheetNav>
          <SheetTab $w={60} $active><TabShape w={56} active /><span>Sheet1</span></SheetTab>
          <SheetTab $w={60}><TabShape w={60} /><span>Sheet2</span></SheetTab>
          <SheetTab $w={60}><TabShape w={60} /><span>Sheet3</span></SheetTab>
          <SheetTab $w={40} aria-label="Insert Worksheet"><TabShape w={30} /><NewSheet><NewSheetIcon /></NewSheet></SheetTab>
          <HScroll>
            <SplitH />
            <ArrowSlot aria-label="Scroll left"><Tri dir="left" s={8} c="#33436b" /></ArrowSlot>
            <ThumbH><Grip /></ThumbH>
            <Spring $f={58} />
            <ArrowSlot aria-label="Scroll right"><Tri dir="right" s={8} c="#33436b" /></ArrowSlot>
            <SplitH />
            <ScrollCorner />
          </HScroll>
        </BottomBar>

        <StatusBar>
          <Ready>Ready</Ready>
          <RecordSlot aria-label="Record macro"><SmallTable /></RecordSlot>
          <ZoomArea>
            <ViewButtons>
              <ViewButton $on aria-label="Normal">
                <svg width="13" height="11"><path d="M.5.5h12v10H.5zM4.500 0v11M8.500 0v11M0 3.500h13M0 7.500h13" fill="#fff" stroke="#5d5a50" /></svg>
              </ViewButton>
              <ViewButton aria-label="Page Layout view">
                <svg width="12" height="12"><path d="M.5.5h11v11H.5z" fill="#bdc4ce" stroke="#5d6068" /><path d="M3.500 2.500h5v7h-5z" fill="#fff" stroke="#5d6068" /><path d="M5 5.500h3M5 7.500h3" stroke="#5d6068" /></svg>
              </ViewButton>
              <ViewButton aria-label="Page Break Preview">
                <svg width="13" height="12"><path d="M.5.5h12v11H.5z" fill="#bdc4ce" stroke="#5d6068" /><path d="M.5.5h4v7h-4zM4.500.5h4v7h-4z" fill="#fff" stroke="#5d6068" /></svg>
              </ViewButton>
            </ViewButtons>
            <Percent>100%</Percent>
            <button aria-label="Zoom out"><ZoomKnob /></button>
            <Slider><Range type="range" aria-label="Zoom" min="0" max="100" defaultValue="50" /></Slider>
            <button aria-label="Zoom in"><ZoomKnob plus /></button>
          </ZoomArea>
        </StatusBar>
      </Workbook>

      <Watermark><strong>Activate Windows</strong>Go to Settings to activate Windows.</Watermark>

      <Dialog onSubmit={(e) => e.preventDefault()}>
        <DialogTitle>
          <h2>Record Macro</h2>
          <Help type="button">?</Help>
          <button type="button" aria-label="Close"><svg width="12" height="12"><path d="m1 1 10 10M11 1 1 11" stroke="#000" /></svg></button>
        </DialogTitle>
        <DialogBody>
          <Label htmlFor="macro-name"><u>M</u>acro name:</Label>
          <NameField id="macro-name" defaultValue="gajikotor" />
          <Label htmlFor="shortcut">Shortcut <u>k</u>ey:</Label>
          <KeyRow>
            <span>Ctrl+</span>
            <KeyField id="shortcut" defaultValue="z" />
            <Caret />
          </KeyRow>
          <Label htmlFor="store">Store macro <u>i</u>n:</Label>
          <SelectWrap>
            <Select id="store" defaultValue="This Workbook"><option>This Workbook</option></Select>
            <span><svg width="9" height="6"><path d="m.5.5 4 4 4-4" fill="none" stroke="#444" /></svg></span>
          </SelectWrap>
          <Label htmlFor="description"><u>D</u>escription:</Label>
          <Description id="description" />
          <Actions>
            <Action $primary type="submit">OK</Action>
            <Action type="button">Cancel</Action>
          </Actions>
        </DialogBody>
      </Dialog>
    </Page>
  );
}
